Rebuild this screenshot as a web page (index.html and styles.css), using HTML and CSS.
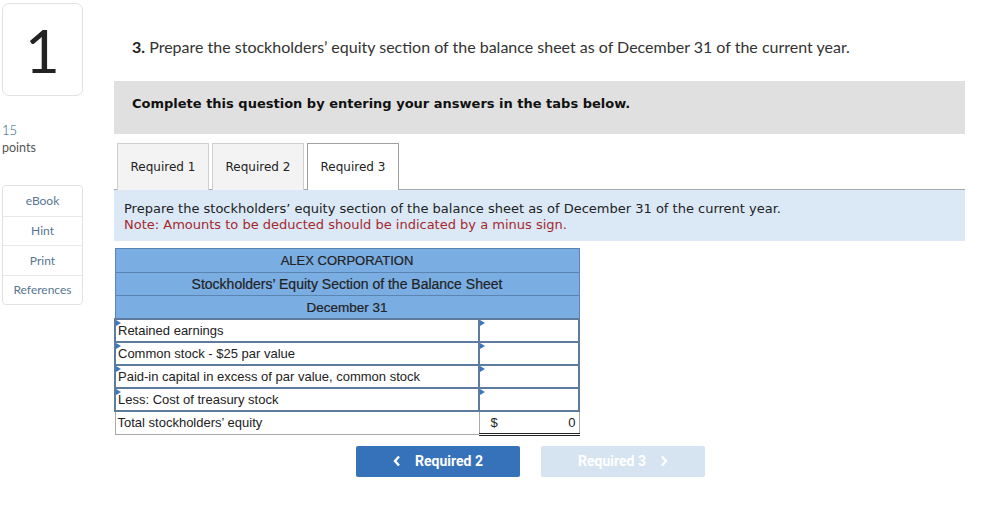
FILE: index.html
```html
<!DOCTYPE html>
<html>
<head>
<meta charset="utf-8">
<link rel="stylesheet" href="styles.css">
</head>
<body>
<div class="page">
  <aside class="side">
    <div class="qnum">1</div>
    <div class="pts"><div class="pts-num">15</div><div class="pts-lbl">points</div></div>
    <div class="tools">
      <div class="tool">eBook</div>
      <div class="tool">Hint</div>
      <div class="tool">Print</div>
      <div class="tool">References</div>
    </div>
  </aside>
  <main class="main">
    <p class="title"><b>3.</b> Prepare the stockholders’ equity section of the balance sheet as of December 31 of the current year.</p>
    <div class="instr">Complete this question by entering your answers in the tabs below.</div>
    <div class="tabs">
      <div class="tab">Required 1</div>
      <div class="tab">Required 2</div>
      <div class="tab active">Required 3</div>
    </div>
    <div class="info">
      <div>Prepare the stockholders’ equity section of the balance sheet as of December 31 of the current year.</div>
      <div class="note">Note: Amounts to be deducted should be indicated by a minus sign.</div>
    </div>
    <table class="sheet">
      <tr class="hd"><td colspan="2">ALEX CORPORATION</td></tr>
      <tr class="hd hd2"><td colspan="2">Stockholders’ Equity Section of the Balance Sheet</td></tr>
      <tr class="hd hd3"><td colspan="2">December 31</td></tr>
      <tr class="in"><td class="lbl mark">Retained earnings</td><td class="val mark"></td></tr>
      <tr class="in"><td class="lbl mark">Common stock - $25 par value</td><td class="val mark"></td></tr>
      <tr class="in"><td class="lbl mark">Paid-in capital in excess of par value, common stock</td><td class="val mark"></td></tr>
      <tr class="in"><td class="lbl mark">Less: Cost of treasury stock</td><td class="val mark"></td></tr>
      <tr class="tot"><td class="lbl">Total stockholders’ equity</td><td class="val"><span class="cur">$</span><span>0</span></td></tr>
    </table>
    <div class="nav">
      <div class="btn prev"><svg width="8" height="12" viewBox="0 0 8 12"><polyline points="6,1.5 2,6 6,10.5" fill="none" stroke="#fff" stroke-width="2.4"/></svg><span>Required 2</span></div>
      <div class="btn next"><span>Required 3</span><svg width="8" height="12" viewBox="0 0 8 12"><polyline points="2,1.5 6,6 2,10.5" fill="none" stroke="#fff" stroke-width="2.4"/></svg></div>
    </div>
  </main>
</div>
</body>
</html>
```
FILE: styles.css
```css
* { box-sizing: border-box; }
body { margin: 0; background: #fff; font-family: "Lato", "Open Sans", sans-serif; color: #222; }
.page { display: flex; width: 981px; height: 530px; }
.side { width: 114px; padding: 3px 0 0 2px; }
.qnum {
  width: 81px; height: 93px; border: 1px solid #e2e2e2; border-radius: 7px;
  display: flex; align-items: center; justify-content: center;
  font-family: "Lato", sans-serif; font-size: 60px; color: #222; line-height: 1;
}
.pts { margin-top: 26px; font-size: 12.5px; line-height: 17px; }
.pts-num { color: #1d5a8e; font-weight: 300; font-size: 13px; }
.pts-lbl { color: #555; }
.tools {
  margin-top: 29px; width: 81px; border: 1px solid #e2e2e2; border-radius: 4px;
}
.tool {
  height: 29.5px; display: flex; align-items: center; justify-content: center;
  font-size: 12px; color: #587691; border-top: 1px solid #e8e8e8;
}
.tool:first-child { border-top: none; }
.main { width: 851px; }
.title {
  margin: 38px 0 0 18px; font-size: 16px; line-height: 18px; color: #333;
}
.title b { color: #222; }
.instr {
  margin-top: 25px; height: 53px; background: #e0e0e0; padding: 15px 0 0 18px;
  font-family: "DejaVu Sans", Verdana, sans-serif; font-weight: bold; font-size: 13px; color: #111;
}
.tabs {
  margin-top: 9px; display: flex; gap: 3px; padding-left: 3px;
  border-bottom: 1px solid #a8a8a8; height: 47px;
}
.tab {
  width: 92px; height: 47px; background: #f3f3f3; border: 1px solid #cfcfcf; border-bottom: none;
  display: flex; align-items: center; justify-content: center;
  font-family: "DejaVu Sans", Verdana, sans-serif; font-size: 12px; color: #222;
}
.tab.active { background: #fff; border-color: #a0a0a0; height: 47px; margin-bottom: -1px; }
.info {
  height: 51px; background: #dbe9f7; padding: 11px 0 0 10px;
  font-family: "DejaVu Sans", Verdana, sans-serif; font-size: 13px; line-height: 16px; color: #222;
}
.info .note { color: #a5282c; }
.sheet {
  margin-top: 7px; border-collapse: collapse; width: 466px;
  font-family: "Liberation Sans", Arial, sans-serif; font-size: 13px; color: #222;
}
.sheet td { padding: 0; }
.hd td {
  background: #7aade2; border: 1px solid #5a85b3; text-align: center; height: 23.5px;
  -webkit-text-stroke: 0.2px #222;
}
.hd2 td { font-size: 14px; -webkit-text-stroke: 0.2px #222; }
.hd3 td { font-size: 13.5px; -webkit-text-stroke: 0.2px #222; }
.in td { border: 2px solid #5d7c9d; height: 23px; position: relative; background: #fff; }
.lbl { padding-left: 2px !important; width: 364px; }
.mark::before {
  content: ""; position: absolute; left: 0; top: 0;
  border-top: 3px solid transparent; border-bottom: 3px solid transparent; border-left: 5px solid #3c78c0;
}
.tot td { border: 1px solid #a9a9a9; height: 23px; }
.tot .val {
  border-bottom: 3px double #222; padding: 0 3px 0 11px !important;
}
.tot .val span.cur { float: left; }
.tot .val span:last-child { float: right; }
.nav { margin-top: 10px; display: flex; gap: 21px; padding-left: 242px; }
.btn {
  width: 164px; height: 31px; border-radius: 2px; display: flex; align-items: center; justify-content: center;
  gap: 14px; font-family: "Roboto", sans-serif; font-weight: bold; font-size: 14px; color: #fff;
}
.prev { background: #3572b9; }
.next { background: #d6e3f1; }
```
